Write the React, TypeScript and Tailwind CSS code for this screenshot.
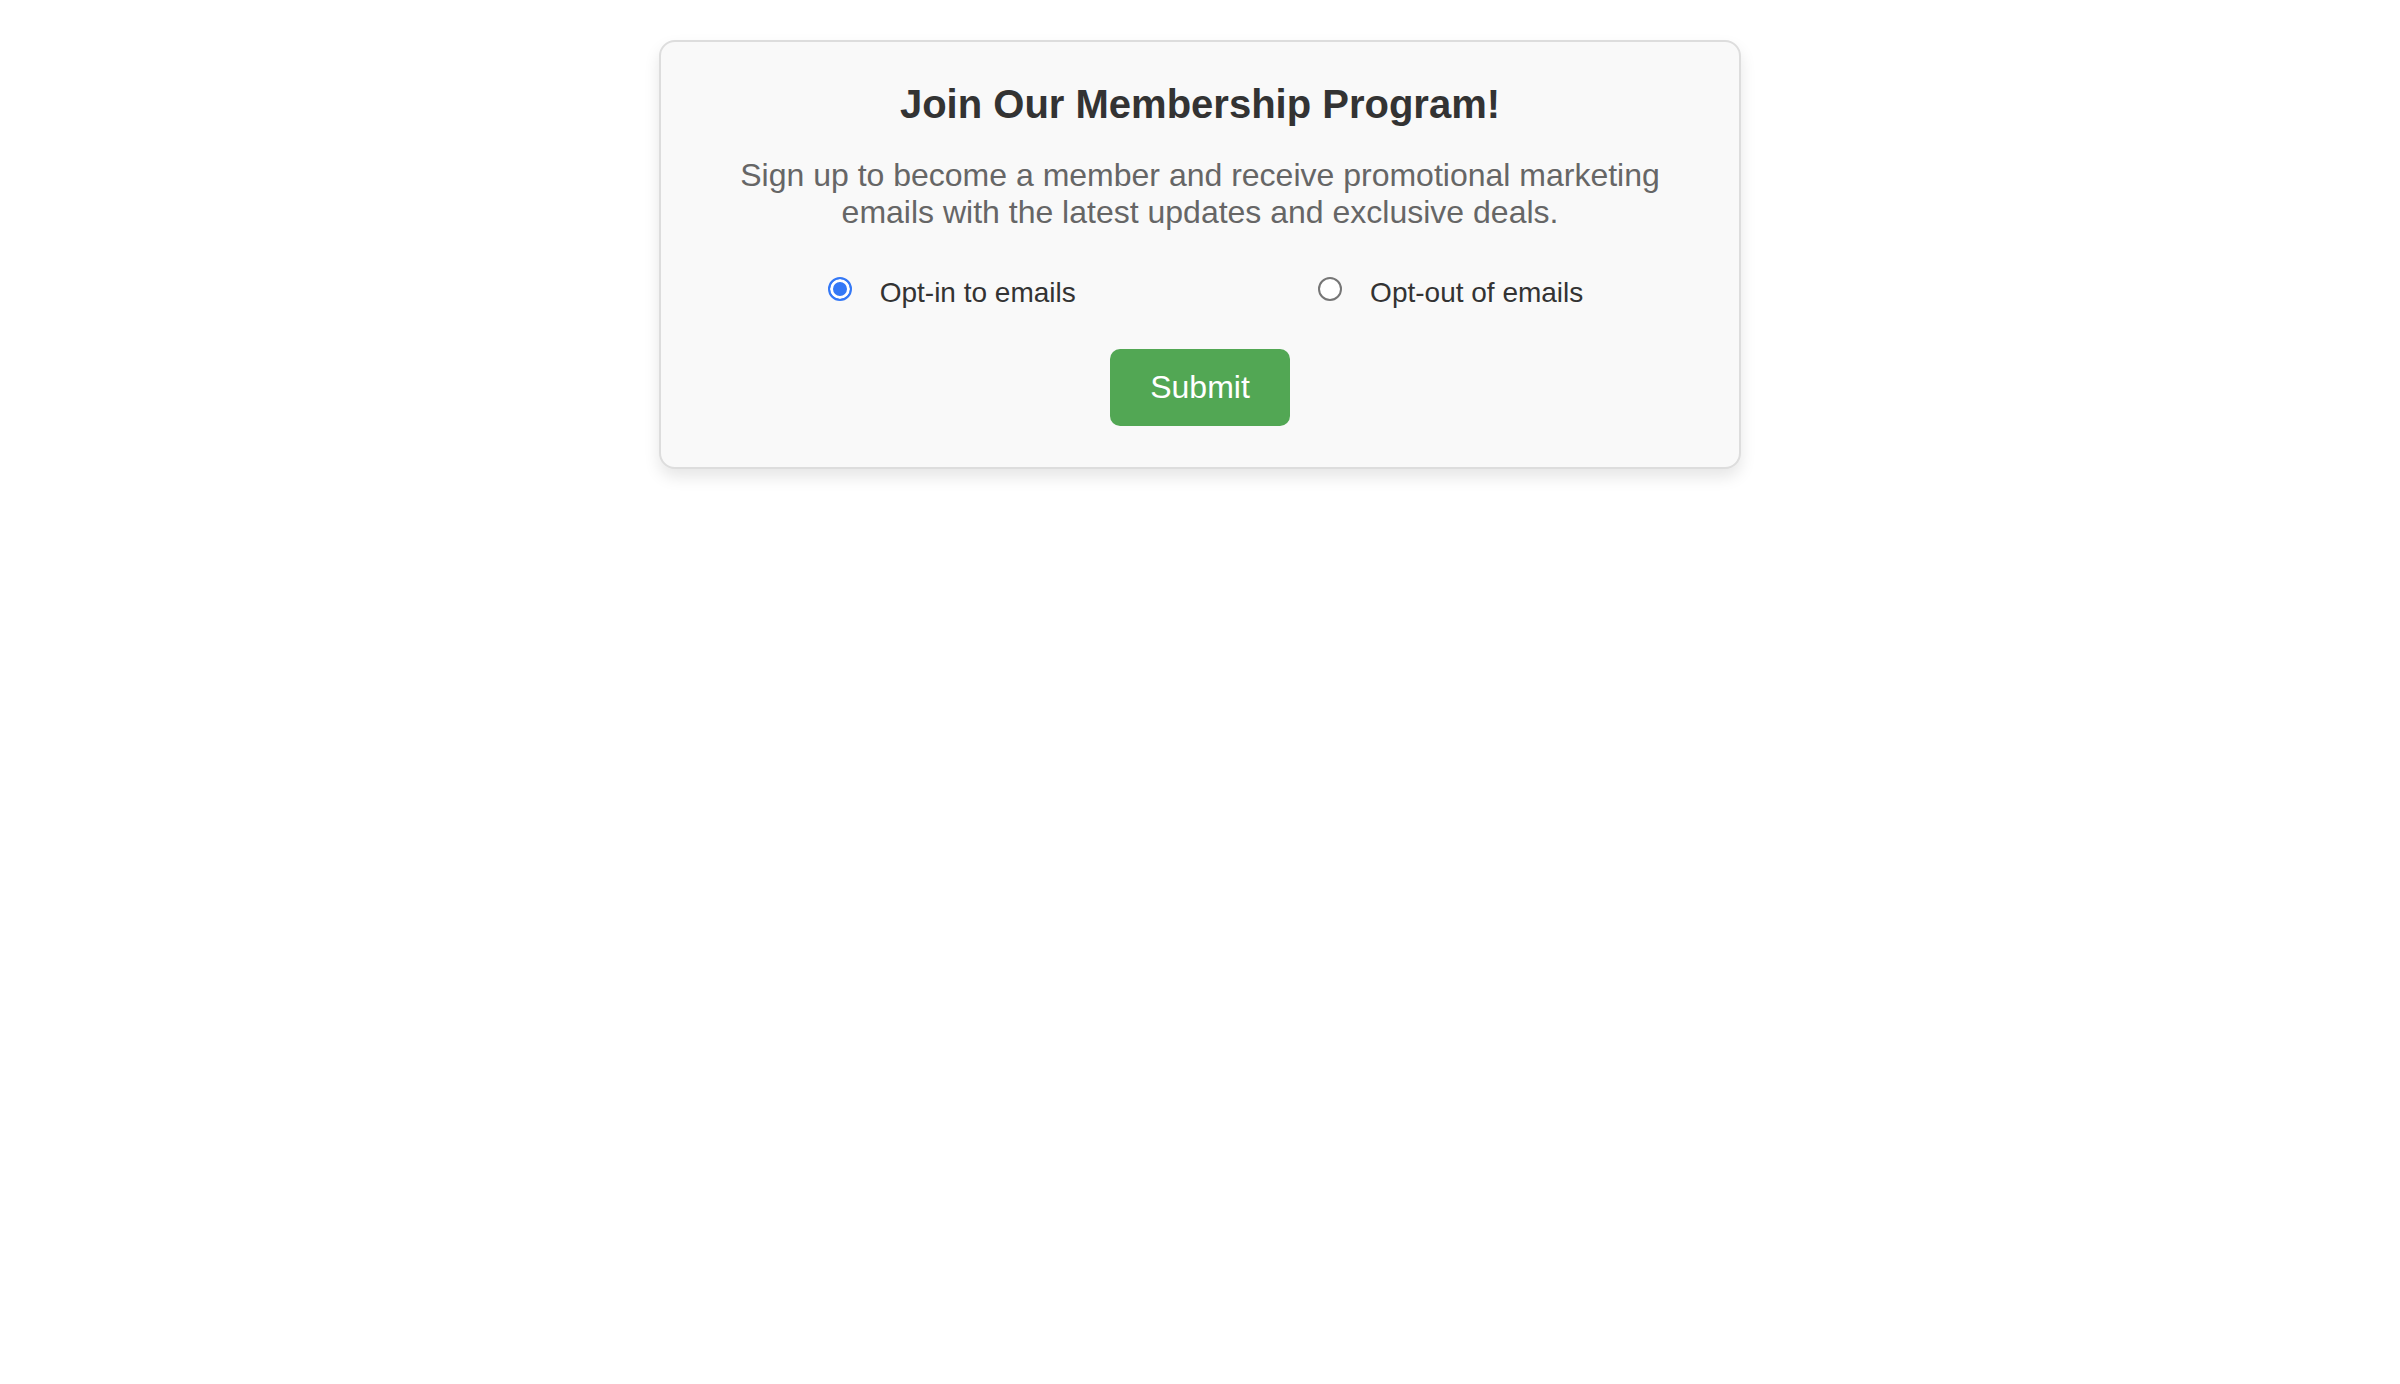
import React, { useState } from 'react';

const options = [
  { value: 'in', label: 'Opt-in to emails' },
  { value: 'out', label: 'Opt-out of emails' },
];

export default function App() {
  const [choice, setChoice] = useState('in');

  return (
    <div className="min-h-screen bg-white pt-[40px] font-['Liberation_Sans',Arial,sans-serif]">
      <div className="mx-auto w-[1082px] rounded-[16px] border-2 border-[#dddddd] bg-[#f9f9f9] px-[40px] pt-[39px] pb-[41px] text-center shadow-[0_8px_16px_rgba(0,0,0,0.1)]">
        <h2 className="text-[40px] font-bold leading-[46px] text-[#333333]">
          Join Our Membership Program!
        </h2>
        <p className="mt-[30px] text-[32px] leading-[36.8px] text-[#666666]">
          Sign up to become a member and receive promotional marketing
          <br />
          emails with the latest updates and exclusive deals.
        </p>

        <div className="mt-[46px] flex justify-around">
          {options.map((o) => (
            <label key={o.value} className="flex cursor-pointer items-start">
              <input
                type="radio"
                name="emails"
                value={o.value}
                checked={choice === o.value}
                onChange={() => setChoice(o.value)}
                className="ml-[11px] mr-[7px] mt-[0px] h-[24px] w-[24px] cursor-pointer appearance-none rounded-full border-2 border-[#767676] bg-white checked:border-[#3478f6] checked:bg-[#3478f6] checked:shadow-[inset_0_0_0_3px_white]"
              />
              <span className="ml-[21px] text-[28px] leading-[32px] text-[#333333]">{o.label}</span>
            </label>
          ))}
        </div>

        <button
          type="button"
          className="mt-[40px] h-[77px] w-[180px] rounded-[10px] bg-[#52a754] text-[32px] leading-[37px] text-white"
        >
          Submit
        </button>
      </div>
    </div>
  );
}
